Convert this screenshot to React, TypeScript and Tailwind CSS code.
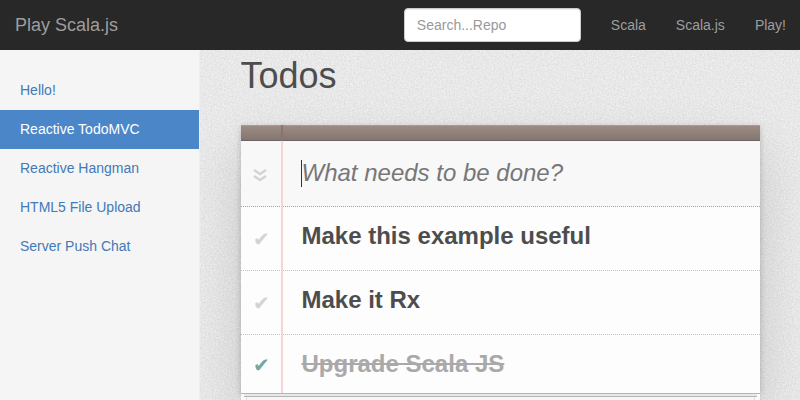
import React from "react";

const pages = [
  "Hello!",
  "Reactive TodoMVC",
  "Reactive Hangman",
  "HTML5 File Upload",
  "Server Push Chat",
];

const todos = [
  { title: "Make this example useful", done: false },
  { title: "Make it Rx", done: false },
  { title: "Upgrade Scala JS", done: true },
];

function Navbar() {
  return (
    <nav className="relative z-10 flex h-[50px] items-center bg-[#282828] pl-[15px] text-sm text-[#9d9d9d]">
      <a className="text-lg leading-5">Play Scala.js</a>
      <input
        className="ml-auto h-[34px] w-[177px] rounded-[4px] border border-[#ccc] bg-white px-3 text-sm shadow-[inset_0_1px_1px_rgba(0,0,0,0.075)] outline-none placeholder:text-[#999]"
        placeholder="Search...Repo"
      />
      <div className="ml-[15px] flex leading-5">
        <a className="px-[15px]">Scala</a>
        <a className="px-[15px]">Scala.js</a>
        <a className="pr-[14px] pl-[15px]">Play!</a>
      </div>
    </nav>
  );
}

function Sidebar() {
  return (
    <aside className="w-[200px] shrink-0 border-r border-[#eee] bg-[#f5f5f5] pt-[21px]">
      {pages.map((page) => (
        <a
          key={page}
          className={
            page === "Reactive TodoMVC"
              ? "block h-[39px] bg-[#4b87c8] pl-5 text-sm leading-[38px] text-white"
              : "block h-[39px] pl-5 text-sm leading-[38px] text-[#4379b9]"
          }
        >
          {page}
        </a>
      ))}
    </aside>
  );
}

function PaperTexture() {
  return (
    <svg className="absolute inset-0 h-full w-full" aria-hidden="true">
      <filter id="grain" colorInterpolationFilters="sRGB">
        <feTurbulence type="fractalNoise" baseFrequency="0.65" numOctaves="2" seed="4" />
        <feColorMatrix values="0.13 0 0 0 0.845  0.13 0 0 0 0.845  0.13 0 0 0 0.845  0 0 0 0 1" />
      </filter>
      <rect width="100%" height="100%" filter="url(#grain)" />
    </svg>
  );
}

function TodoCard() {
  return (
    <section className="relative mt-[31px] h-[268px] w-[519px] bg-[#fdfdfd] shadow-[0_2px_6px_0_rgba(0,0,0,0.2),0_25px_50px_0_rgba(0,0,0,0.15)]">
      <div className="h-4 border-t border-b border-t-[#a69c97] border-b-[#6c615c] bg-linear-to-b from-[#9b8b83] to-[#847670]" />
      <div className="flex h-[66px] items-center border-b border-dotted border-[#a5a5a5] bg-[#f8f8f8]">
        <svg className="mt-[3px] ml-3 h-4 w-[14px]" viewBox="0 0 14 16" fill="none" stroke="#d3d3d3" strokeWidth="2.4">
          <path d="M1 3 7 7 13 3M1 9 7 13 13 9" />
        </svg>
        <div className="ml-[34px] h-[27px] w-px bg-[#333]" />
        <span className="-mt-0.5 -ml-[0.5px] text-2xl leading-8 text-[#777] italic">What needs to be done?</span>
      </div>
      <ul>
        {todos.map((todo) => (
          <li
            key={todo.title}
            className="flex h-16 items-start border-b border-dotted border-[#c2c2c2] pt-[13px] last:h-[58px] last:border-0"
          >
            <span
              className={
                todo.done
                  ? "w-[60.5px] pt-[5px] pl-3 font-['DejaVu_Sans'] text-[20px] leading-6 text-[#76a69d]"
                  : "w-[60.5px] pt-[7px] pl-3 font-['DejaVu_Sans'] text-[20px] leading-6 text-[#d3d3d3]"
              }
            >
              ✔
            </span>
            <span
              className={
                todo.done
                  ? "text-2xl leading-8 font-bold text-[#a9a9a9] line-through"
                  : "text-2xl leading-8 font-bold text-[#4d4d4d]"
              }
            >
              {todo.title}
            </span>
          </li>
        ))}
      </ul>
      <div className="absolute top-0 left-10 h-full w-[2px] bg-[#f5d0d0]/90" />
      <div className="absolute top-0 left-10 h-4 w-[2px] bg-[#8a746d]" />
    </section>
  );
}

export default function App() {
  return (
    <div className="h-[400px] w-[800px] overflow-hidden bg-[#e8e8e8] font-['Liberation_Sans',Arial,sans-serif]">
      <Navbar />
      <div className="flex h-[350px]">
        <Sidebar />
        <main className="relative flex-1 overflow-hidden pl-[41px]">
          <PaperTexture />
          <h1 className="relative -ml-[0.5px] pt-[7px] text-4xl leading-[37px] text-[#4d4d4d]">Todos</h1>
          <TodoCard />
          <div className="relative w-[519px] bg-[#fafafa]">
            <div className="h-px bg-[#b5b5b5]" />
            <div className="mx-[3px] h-[3px] border-b border-[#b5b5b5] bg-[#e7e9e8]" />
            <div className="mx-[5px] h-3 border-x border-[#e0e0e0] bg-[#f6f6f6]" />
          </div>
        </main>
      </div>
    </div>
  );
}
